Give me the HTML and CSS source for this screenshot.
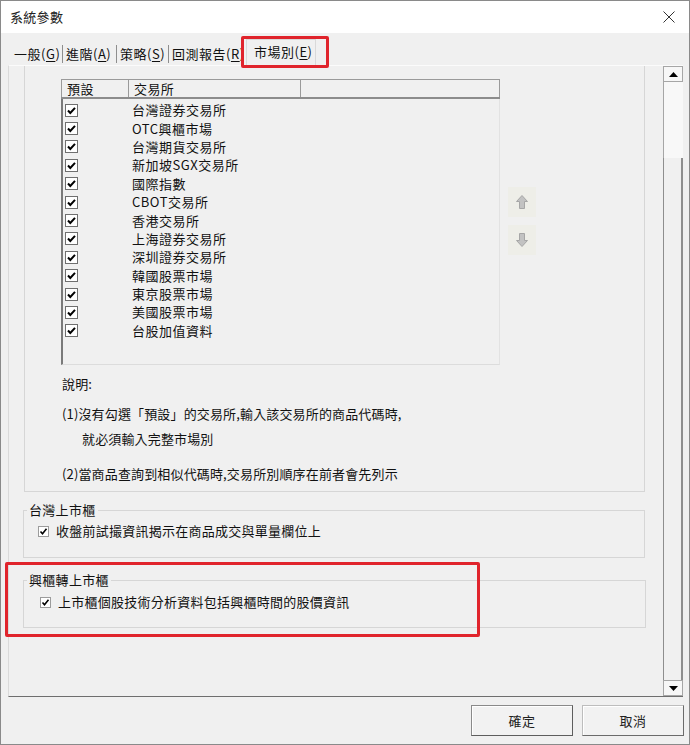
FILE: index.html
```html
<!DOCTYPE html>
<html lang="zh-Hant">
<head>
<meta charset="utf-8">
<title>系統參數</title>
<link rel="stylesheet" href="styles.css">
</head>
<body>
<div class="window">
  <div class="titlebar">
    <span class="title">系統參數</span>
    <svg class="close" width="12" height="12" viewBox="0 0 12 12"><path d="M0.5 0.5L11.5 11.5M11.5 0.5L0.5 11.5"/></svg>
  </div>
  <div class="tabbar">
    <div class="tab t1">一般(<u>G</u>)</div>
    <div class="tab t2">進階(<u>A</u>)</div>
    <div class="tab t3">策略(<u>S</u>)</div>
    <div class="tab t4">回測報告(<u>R</u>)</div>
    <div class="tab active">市場別(<u>E</u>)</div>
  </div>
  <div class="pane">
    <div class="page">
      <div class="group1">
        <div class="listrow">
          <div class="list">
            <div class="lhead">
              <div class="hc c1">預設</div>
              <div class="hc c2">交易所</div>
              <div class="hc c3"></div>
            </div>
            <div class="lbody">
              <div class="row"><span class="cb"><svg viewBox="0 0 11 11"><path d="M2 5.5L4.3 8L9 2.8"/></svg></span><span class="name">台灣證券交易所</span></div>
              <div class="row"><span class="cb"><svg viewBox="0 0 11 11"><path d="M2 5.5L4.3 8L9 2.8"/></svg></span><span class="name">OTC興櫃市場</span></div>
              <div class="row"><span class="cb"><svg viewBox="0 0 11 11"><path d="M2 5.5L4.3 8L9 2.8"/></svg></span><span class="name">台灣期貨交易所</span></div>
              <div class="row"><span class="cb"><svg viewBox="0 0 11 11"><path d="M2 5.5L4.3 8L9 2.8"/></svg></span><span class="name">新加坡SGX交易所</span></div>
              <div class="row"><span class="cb"><svg viewBox="0 0 11 11"><path d="M2 5.5L4.3 8L9 2.8"/></svg></span><span class="name">國際指數</span></div>
              <div class="row"><span class="cb"><svg viewBox="0 0 11 11"><path d="M2 5.5L4.3 8L9 2.8"/></svg></span><span class="name">CBOT交易所</span></div>
              <div class="row"><span class="cb"><svg viewBox="0 0 11 11"><path d="M2 5.5L4.3 8L9 2.8"/></svg></span><span class="name">香港交易所</span></div>
              <div class="row"><span class="cb"><svg viewBox="0 0 11 11"><path d="M2 5.5L4.3 8L9 2.8"/></svg></span><span class="name">上海證券交易所</span></div>
              <div class="row"><span class="cb"><svg viewBox="0 0 11 11"><path d="M2 5.5L4.3 8L9 2.8"/></svg></span><span class="name">深圳證券交易所</span></div>
              <div class="row"><span class="cb"><svg viewBox="0 0 11 11"><path d="M2 5.5L4.3 8L9 2.8"/></svg></span><span class="name">韓國股票市場</span></div>
              <div class="row"><span class="cb"><svg viewBox="0 0 11 11"><path d="M2 5.5L4.3 8L9 2.8"/></svg></span><span class="name">東京股票市場</span></div>
              <div class="row"><span class="cb"><svg viewBox="0 0 11 11"><path d="M2 5.5L4.3 8L9 2.8"/></svg></span><span class="name">美國股票市場</span></div>
              <div class="row"><span class="cb"><svg viewBox="0 0 11 11"><path d="M2 5.5L4.3 8L9 2.8"/></svg></span><span class="name">台股加值資料</span></div>
            </div>
          </div>
          <div class="movers">
            <div class="mover"><svg width="12" height="14" viewBox="0 0 12 14"><path d="M6 0.5L11.5 6.5H8.5V13.5H3.5V6.5H0.5Z"/></svg></div>
            <div class="mover"><svg width="12" height="14" viewBox="0 0 12 14"><path d="M6 13.5L11.5 7.5H8.5V0.5H3.5V7.5H0.5Z"/></svg></div>
          </div>
        </div>
        <div class="notes">
          <p class="n0">說明:</p>
          <p class="n1">(1)沒有勾選「預設」的交易所,輸入該交易所的商品代碼時,</p>
          <p class="n2">就必須輸入完整市場別</p>
          <p class="n3">(2)當商品查詢到相似代碼時,交易所別順序在前者會先列示</p>
        </div>
      </div>
      <fieldset class="grp grp2">
        <legend>台灣上市櫃</legend>
        <div class="opt"><span class="scb"><svg viewBox="0 0 9 9"><path d="M1.5 4.5L3.5 6.8L7.5 1.8"/></svg></span><span>收盤前試撮資訊揭示在商品成交與單量欄位上</span></div>
      </fieldset>
      <fieldset class="grp grp3">
        <legend>興櫃轉上市櫃</legend>
        <div class="opt"><span class="scb"><svg viewBox="0 0 9 9"><path d="M1.5 4.5L3.5 6.8L7.5 1.8"/></svg></span><span>上市櫃個股技術分析資料包括興櫃時間的股價資訊</span></div>
      </fieldset>
    </div>
    <div class="vscroll">
      <div class="sbtn"><svg width="9" height="5" viewBox="0 0 9 5"><path d="M4.5 0L9 5H0Z"/></svg></div>
      <div class="thumb"></div>
      <div class="track"></div>
      <div class="sbtn"><svg width="9" height="5" viewBox="0 0 9 5"><path d="M0 0H9L4.5 5Z"/></svg></div>
    </div>
  </div>
  <div class="footer">
    <button class="btn default">確定</button>
    <button class="btn">取消</button>
  </div>
  <div class="mark mark-tab"></div>
  <div class="mark mark-group"></div>
</div>
</body>
</html>
```
FILE: styles.css
```css
* { box-sizing: border-box; }
html, body { margin: 0; padding: 0; }
body {
  width: 690px;
  height: 745px;
  overflow: hidden;
  font-family: "Noto Sans CJK TC", "Microsoft JhengHei", sans-serif;
  font-size: 13px;
  color: #111;
  background: #f0f0f0;
}
.window {
  position: relative;
  width: 690px;
  height: 745px;
  border: 1px solid #8a8a8a;
  background: #f0f0f0;
  display: flex;
  flex-direction: column;
  overflow: hidden;
}
.titlebar {
  height: 32px;
  flex: none;
  background: #fff;
  display: flex;
  align-items: center;
  justify-content: space-between;
  padding: 0 14px 0 9px;
}
.title { font-size: 13px; line-height: 18px; color: #222; letter-spacing: 0.3px; }
.close path { stroke: #333; stroke-width: 1; fill: none; }

.tabbar {
  height: 32px;
  flex: none;
  display: flex;
  align-items: flex-end;
  padding-left: 10px;
}
.tab {
  height: 18px;
  margin-bottom: 2px;
  padding: 0 0 0 3px;
  line-height: 18px;
  border-right: 1px solid #8e8e8e;
  white-space: nowrap;
  letter-spacing: 0.5px;
  flex: none;
}
.tab u { text-decoration-thickness: 1px; text-underline-offset: 2px; }
.tab.t1 { width: 52px; }
.tab.t2 { width: 54px; }
.tab.t3 { width: 52px; }
.tab.t4 {
  width: 77px;
  overflow: hidden;
  border-right: none;
}
.tab.active {
  width: 70px;
  height: 26px;
  margin-bottom: 0;
  padding: 3px 0 0 7px;
  border: 1px solid #d9d9d9;
  border-bottom: none;
  background: #f0f0f0;
}

.pane {
  height: 632px;
  flex: none;
  margin: 0 6px 0 7px;
  display: flex;
  border-left: 1px solid #dadada;
  border-top: 1px solid #fbfbfb;
  border-bottom: 1px solid #6e6e6e;
}
.page {
  flex: 1;
  overflow: hidden;
}
.group1 {
  margin-left: 15px;
  width: 621px;
  height: 426px;
  border: 1px solid #d6d6d6;
  border-top: none;
  padding: 13px 0 0 36px;
}
.listrow { display: flex; }
.list {
  width: 439px;
  height: 286px;
  display: flex;
  flex-direction: column;
}
.lhead {
  height: 20px;
  display: flex;
  border-top: 1px solid #9a9a9a;
  border-bottom: 2px solid #8c8c8c;
}
.hc {
  line-height: 17px;
  padding-left: 5px;
  border-left: 1px solid #9a9a9a;
  letter-spacing: 0.4px;
}
.hc.c1 { width: 67px; }
.hc.c2 { width: 172px; }
.hc.c3 { flex: 1; border-right: 1px solid #9a9a9a; }
.lbody {
  flex: 1;
  border-left: 2px solid #7a7a7a;
  border-right: 1px solid #e2e2e2;
  border-bottom: 1px solid #dcdcdc;
  padding: 2px 0 0 2px;
}
.row {
  height: 18.4px;
  display: flex;
  align-items: center;
}
.cb {
  width: 13px;
  height: 13px;
  border: 1px solid #6f6f6f;
  background: #fff;
  display: flex;
}
.cb svg { width: 11px; height: 11px; }
.cb path { stroke: #000; stroke-width: 2; fill: none; }
.name { margin-left: 54px; line-height: 18px; letter-spacing: 0.5px; }

.movers {
  display: flex;
  flex-direction: column;
  gap: 8px;
  margin-left: 8px;
  padding-top: 108px;
}
.mover {
  width: 28px;
  height: 30px;
  background: #eeeee8;
  display: flex;
  align-items: center;
  justify-content: center;
}
.mover path { fill: #c2c2c2; stroke: #a6a6a6; stroke-width: 1; }

.notes { padding-left: 1px; letter-spacing: 0.15px; }
.notes p { margin: 0; line-height: 18px; }
.n0 { margin-top: 10px !important; }
.n1 { margin-top: 12px !important; }
.n2 { margin-top: 7px !important; padding-left: 20px; }
.n3 { margin-top: 17px !important; }

.grp {
  margin: 0;
  padding: 0;
  border: 1px solid #d6d6d6;
  min-width: 0;
}
.grp legend {
  margin-left: 3px;
  padding: 0 2px;
  line-height: 16px;
  letter-spacing: 0.3px;
}
.grp2 {
  margin: 10px 0 0 14px;
  width: 622px;
  height: 56px;
}
.grp3 {
  margin: 14px 0 0 14px;
  width: 623px;
  height: 56px;
}
.opt {
  display: flex;
  align-items: center;
  padding: 4px 0 0 14px;
  line-height: 18px;
  letter-spacing: 0.25px;
}
.grp3 .opt { padding-left: 16px; padding-top: 5px; }
.scb {
  width: 11px;
  height: 11px;
  border: 1px solid #9c9c9c;
  background: #fff;
  display: flex;
  margin-right: 7px;
}
.scb svg { width: 9px; height: 9px; }
.scb path { stroke: #000; stroke-width: 1.6; fill: none; }

.vscroll {
  width: 20px;
  flex: none;
  display: flex;
  flex-direction: column;
}
.sbtn {
  height: 16px;
  border: 1px solid #a6a6a6;
  background: #f7f7f7;
  display: flex;
  align-items: center;
  justify-content: center;
}
.sbtn path { fill: #000; }
.thumb {
  height: 76px;
  border-left: 1px solid #a6a6a6;
  background: #f8f8f8;
}
.track {
  flex: 1;
  border-left: 1px solid #8e8e8e;
  border-right: 2px solid #8e8e8e;
  background: #f0f0f0;
}

.footer {
  flex: 1;
  display: flex;
  justify-content: flex-end;
  align-items: flex-start;
  gap: 9px;
  padding: 8px 5px 0 0;
}
.btn {
  width: 102px;
  height: 31px;
  font-family: inherit;
  font-size: 13px;
  color: #222;
  background: #f2f2f2;
  border: 1px solid #bdbdbd;
  border-right-color: #6b6b6b;
  border-bottom-color: #6b6b6b;
  box-shadow: inset 1px 1px 0 #fff;
  padding: 0;
  letter-spacing: 0.5px;
}
.btn.default { border-color: #8a8a8a #5e5e5e #5e5e5e #8a8a8a; }

.mark {
  position: absolute;
  border: 3px solid #e0242c;
  border-radius: 2px;
  pointer-events: none;
}
.mark-tab { left: 240px; top: 35px; width: 88px; height: 32px; }
.mark-group { left: 4px; top: 561px; width: 475px; height: 75px; }
```
